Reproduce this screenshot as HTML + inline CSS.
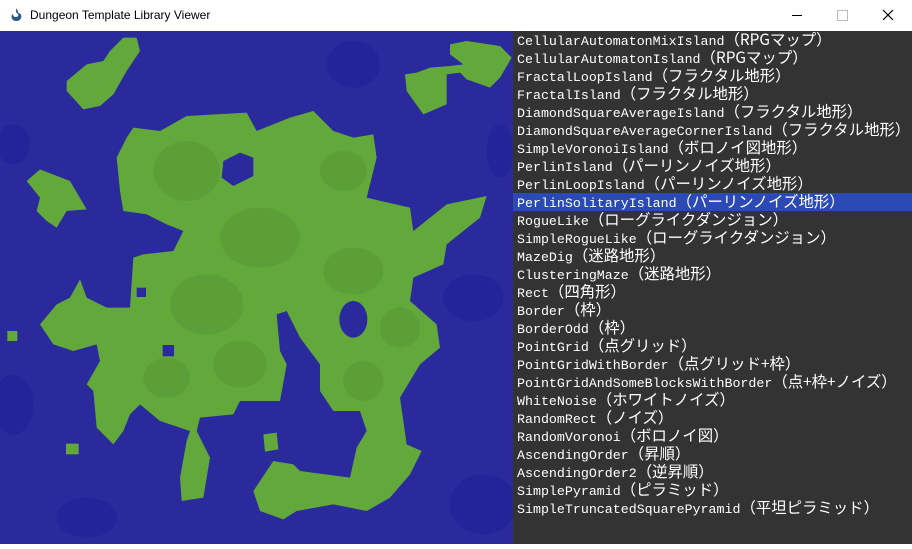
<!DOCTYPE html>
<html><head><meta charset="utf-8"><style>
body{margin:0;width:912px;height:544px;overflow:hidden;background:#fff;font-family:"Liberation Sans","Noto Sans CJK JP",sans-serif}
#title{position:absolute;left:0;top:0;width:912px;height:31px;background:#fff}
#title .t{position:absolute;left:30px;top:8px;font-size:12px;color:#000}
#map{position:absolute;left:0;top:31px;width:513px;height:513px;background:#2a2a9c}
#list{position:absolute;left:513px;top:31px;width:399px;height:513px;background:#333333;color:#fff;font-family:"Liberation Mono","Noto Sans CJK JP",monospace;font-size:13.3px}
.r{height:18px;line-height:17px;padding-left:4px;white-space:nowrap}
.r span{font-size:15.4px;font-family:"Noto Sans CJK JP",monospace}
.s{background:#2c4ab6}
</style></head><body>
<div id="title">
<svg style="position:absolute;left:9px;top:7px" width="16" height="16" viewBox="0 0 16 16"><path d="M8 1c-1 2 2 3 1 5 3 0 4 3 3 5-1 3-5 4-8 2C2 11 2 8 4 7c0 2 1 3 3 3s3-2 2-3C7 6 6 3 8 1z" fill="#2a5b86"/></svg>
<div class="t">Dungeon Template Library Viewer</div>
<div style="position:absolute;left:792px;top:15px;width:10px;height:1px;background:#000"></div>
<div style="position:absolute;left:837px;top:10px;width:9px;height:9px;border:1px solid #bbb"></div>
<svg style="position:absolute;left:882px;top:9px" width="12" height="12"><path d="M1 1L11 11M11 1L1 11" stroke="#000" stroke-width="1.2"/></svg>
</div>
<div id="map"><svg width="513" height="513" viewBox="0 0 1539 1539">
<g fill="#23239a"><ellipse cx="1060" cy="100" rx="80" ry="70"/><ellipse cx="40" cy="1120" rx="60" ry="90"/><ellipse cx="1420" cy="800" rx="90" ry="70"/><ellipse cx="1450" cy="1420" rx="100" ry="90"/><ellipse cx="260" cy="1460" rx="90" ry="60"/><ellipse cx="40" cy="340" rx="50" ry="60"/><ellipse cx="1500" cy="360" rx="40" ry="80"/></g>
<g fill="#62a83a">
<polygon points="400,290 480,300 560,255 740,245 770,300 870,260 940,240 1000,300 1060,320 1120,310 1130,380 1100,500 1230,530 1240,600 1340,520 1460,495 1440,560 1340,640 1330,700 1240,740 1230,810 1310,880 1320,950 1260,1000 1200,1100 1220,1240 1265,1260 1230,1330 1170,1400 1100,1440 1000,1420 890,1440 850,1465 780,1440 760,1380 820,1290 880,1300 900,1320 1050,1340 1070,1250 1100,1200 1080,1140 1000,1140 960,1080 960,1000 900,920 860,840 830,850 840,960 860,1000 840,1110 720,1110 700,1150 600,1160 590,1200 630,1280 610,1400 545,1410 540,1340 560,1230 570,1200 480,1170 420,1120 390,1150 370,1200 340,1240 290,1190 280,1080 260,1060 300,990 290,940 220,960 160,940 120,880 170,820 210,800 240,745 260,800 320,830 390,830 400,680 430,670 520,660 550,600 500,580 440,550 370,540 360,480 350,380 380,320"/>
<polygon points="200,150 260,100 310,90 330,60 370,20 410,20 420,60 380,120 340,190 300,225 250,235 200,180"/>
<polygon points="80,450 120,415 210,450 260,535 200,540 170,590 140,570 110,540 120,500"/>
<polygon points="1350,40 1400,30 1500,45 1535,80 1500,140 1470,170 1400,145 1380,125 1340,130 1340,220 1270,250 1220,180 1215,130 1250,125 1290,110 1350,105 1390,100 1350,70"/>
<rect x="22" y="900" width="30" height="30"/><rect x="198" y="1238" width="38" height="32"/><polygon points="790,1210 830,1205 835,1255 795,1262"/>
</g>
<g fill="#5c9f39"><ellipse cx="560" cy="420" rx="100" ry="90"/><ellipse cx="780" cy="620" rx="120" ry="90"/><ellipse cx="1030" cy="420" rx="70" ry="60"/><ellipse cx="620" cy="820" rx="110" ry="90"/><ellipse cx="500" cy="1040" rx="70" ry="60"/><ellipse cx="1060" cy="720" rx="90" ry="70"/><ellipse cx="1200" cy="890" rx="60" ry="60"/><ellipse cx="1090" cy="1050" rx="60" ry="60"/><ellipse cx="720" cy="1000" rx="80" ry="70"/></g>
<g fill="#2a2a9c"><polygon points="670,390 720,365 760,380 760,435 700,465 665,440"/><ellipse cx="1060" cy="865" rx="42" ry="55"/><rect x="488" y="942" width="34" height="34"/><rect x="410" y="770" width="28" height="28"/></g>
</svg></div>
<div id="list">
<div class="r">CellularAutomatonMixIsland<span>（RPGマップ）</span></div>
<div class="r">CellularAutomatonIsland<span>（RPGマップ）</span></div>
<div class="r">FractalLoopIsland<span>（フラクタル地形）</span></div>
<div class="r">FractalIsland<span>（フラクタル地形）</span></div>
<div class="r">DiamondSquareAverageIsland<span>（フラクタル地形）</span></div>
<div class="r">DiamondSquareAverageCornerIsland<span>（フラクタル地形）</span></div>
<div class="r">SimpleVoronoiIsland<span>（ボロノイ図地形）</span></div>
<div class="r">PerlinIsland<span>（パーリンノイズ地形）</span></div>
<div class="r">PerlinLoopIsland<span>（パーリンノイズ地形）</span></div>
<div class="r s">PerlinSolitaryIsland<span>（パーリンノイズ地形）</span></div>
<div class="r">RogueLike<span>（ローグライクダンジョン）</span></div>
<div class="r">SimpleRogueLike<span>（ローグライクダンジョン）</span></div>
<div class="r">MazeDig<span>（迷路地形）</span></div>
<div class="r">ClusteringMaze<span>（迷路地形）</span></div>
<div class="r">Rect<span>（四角形）</span></div>
<div class="r">Border<span>（枠）</span></div>
<div class="r">BorderOdd<span>（枠）</span></div>
<div class="r">PointGrid<span>（点グリッド）</span></div>
<div class="r">PointGridWithBorder<span>（点グリッド+枠）</span></div>
<div class="r">PointGridAndSomeBlocksWithBorder<span>（点+枠+ノイズ）</span></div>
<div class="r">WhiteNoise<span>（ホワイトノイズ）</span></div>
<div class="r">RandomRect<span>（ノイズ）</span></div>
<div class="r">RandomVoronoi<span>（ボロノイ図）</span></div>
<div class="r">AscendingOrder<span>（昇順）</span></div>
<div class="r">AscendingOrder2<span>（逆昇順）</span></div>
<div class="r">SimplePyramid<span>（ピラミッド）</span></div>
<div class="r">SimpleTruncatedSquarePyramid<span>（平坦ピラミッド）</span></div>
</div>
</body></html>
